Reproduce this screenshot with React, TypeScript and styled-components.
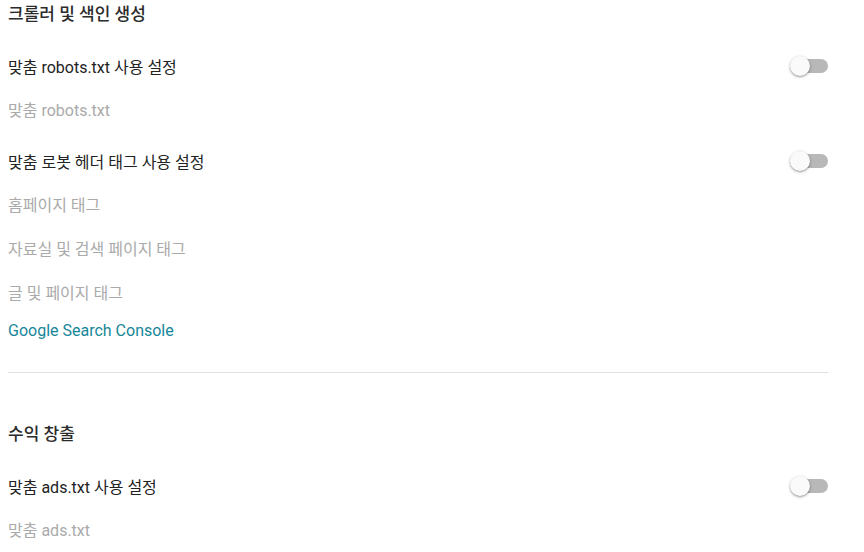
import React from "react";
import styled, { createGlobalStyle } from "styled-components";

const Global = createGlobalStyle`
  html, body { margin: 0; padding: 0; background: #fff; }
  body { font-family: Roboto, "Noto Sans CJK KR", "Noto Sans", sans-serif; }
`;

const Page = styled.div`
  width: 820px;
  padding-left: 8px;
  display: flex;
  flex-direction: column;
`;

const Section = styled.section`
  display: flex;
  flex-direction: column;
`;

const Heading = styled.h2`
  margin: 0 0 16px;
  height: 28px;
  line-height: 28px;
  font-size: 17px;
  font-weight: 500;
  color: #2b2b2b;
`;

const Group = styled.div<{ $gap?: number }>`
  display: flex;
  flex-direction: column;
  margin-bottom: ${(p) => p.$gap ?? 0}px;
`;

const Row = styled.div`
  height: 44px;
  display: flex;
  align-items: center;
  justify-content: space-between;
  font-size: 16px;
  color: #222;
`;

const SubItem = styled.div`
  height: 44px;
  line-height: 46px;
  font-size: 16px;
  color: #aaa;
`;

const Link = styled.a`
  display: block;
  height: 30px;
  line-height: 32px;
  font-size: 16px;
  color: #17879a;
  text-decoration: none;
`;

const Divider = styled.hr`
  border: 0;
  border-top: 1px solid #e0e0e0;
  margin: 27px 0 47px;
  width: 820px;
`;

const Track = styled.span`
  position: relative;
  width: 36px;
  height: 14px;
  border-radius: 7px;
  background: #b8b8b8;
  flex: none;
`;

const Thumb = styled.span`
  position: absolute;
  left: -2px;
  top: -3px;
  width: 20px;
  height: 20px;
  border-radius: 50%;
  background: #fafafa;
  box-shadow: 0 1px 3px rgba(0, 0, 0, 0.35), 0 1px 1px rgba(0, 0, 0, 0.12);
`;

const Toggle = () => (
  <Track>
    <Thumb />
  </Track>
);

export default function App() {
  return (
    <>
      <Global />
      <Page>
        <Section>
          <Heading>크롤러 및 색인 생성</Heading>
          <Group $gap={7}>
            <Row>
              <span>맞춤 robots.txt 사용 설정</span>
              <Toggle />
            </Row>
            <SubItem>맞춤 robots.txt</SubItem>
          </Group>
          <Group>
            <Row>
              <span>맞춤 로봇 헤더 태그 사용 설정</span>
              <Toggle />
            </Row>
            <SubItem>홈페이지 태그</SubItem>
            <SubItem>자료실 및 검색 페이지 태그</SubItem>
            <SubItem>글 및 페이지 태그</SubItem>
          </Group>
          <Link href="#">Google Search Console</Link>
        </Section>
        <Divider />
        <Section>
          <Heading>수익 창출</Heading>
          <Group>
            <Row>
              <span>맞춤 ads.txt 사용 설정</span>
              <Toggle />
            </Row>
            <SubItem>맞춤 ads.txt</SubItem>
          </Group>
        </Section>
      </Page>
    </>
  );
}
